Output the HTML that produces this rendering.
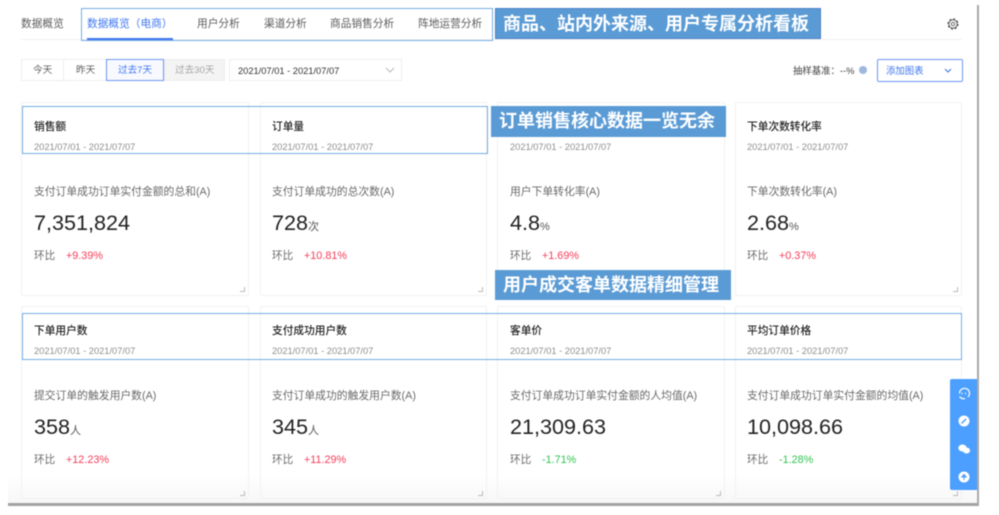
<!DOCTYPE html>
<html lang="zh">
<head>
<meta charset="utf-8">
<title>数据概览</title>
<style>
html,body{margin:0;padding:0;background:#fff;}
body{width:999px;height:515px;overflow:hidden;position:relative;font-family:"Liberation Sans","Noto Sans CJK SC",sans-serif;}
#p{position:absolute;left:0;top:0;width:999px;height:515px;filter:blur(.5px);overflow:hidden;background:#fff;}
#p div{position:absolute;white-space:nowrap;}
.t{font-size:10.7px;line-height:14px;color:#5c5c5c;}
.card{width:227.5px;height:193px;border:1px solid #f2f2f2;border-radius:2px;box-sizing:border-box;background:transparent;}
.ti{font-size:10.7px;line-height:14px;color:#222;font-weight:500;}
.dt{font-size:9.3px;line-height:12px;color:#8e8e8e;}
.de{font-size:10.8px;line-height:14px;color:#6a6a6a;}
.v{font-size:21.6px;line-height:26px;color:#222;}
.v span{font-size:11px;color:#555;}
.hb{font-size:10.6px;line-height:14px;color:#6a6a6a;}
.up{font-size:10.8px;line-height:14px;color:#f53c58;}
.dn{font-size:10.8px;line-height:14px;color:#30c552;}
.rz{width:5px;height:5px;border-right:1.5px solid #bbb;border-bottom:1.5px solid #bbb;box-sizing:border-box;}
.bn{background:#5b9bd5;color:#fff;font-size:18px;font-weight:700;line-height:30px;box-sizing:border-box;}
.ol{border:1.3px solid #74ade2;box-sizing:border-box;}
</style>
</head>
<body>
<div id="p">
  <!-- frame -->
  <div style="left:8px;top:475px;width:968px;height:28px;background:linear-gradient(#fff,#f7f7f7)"></div>
  <div style="left:8px;top:503px;width:971px;height:3px;background:#a2a2a2"></div>
  <div style="left:976.5px;top:5px;width:2.5px;height:501px;background:#a8a8a8"></div>

  <!-- header -->
  <div style="left:21px;top:39px;width:941px;height:1px;background:#f0f0f0"></div>
  <div class="t" style="left:21px;top:17px">数据概览</div>
  <div class="t" style="left:87px;top:17px;color:#3f78f0">数据概览（电商）</div>
  <div style="left:87px;top:38px;width:86px;height:2px;background:#3f78f0"></div>
  <div class="t" style="left:197px;top:17px">用户分析</div>
  <div class="t" style="left:264px;top:17px">渠道分析</div>
  <div class="t" style="left:330px;top:17px">商品销售分析</div>
  <div class="t" style="left:418px;top:17px">阵地运营分析</div>
  <div class="ol" style="left:81px;top:8px;width:412px;height:33px"></div>
  <div class="bn" style="left:495px;top:8px;width:326px;height:31px;padding-left:7px;border:1px solid #4a80c8">商品、站内外来源、用户专属分析看板</div>
  <svg style="position:absolute;left:947px;top:18px" width="12" height="12" viewBox="0 0 12 12" fill="none" stroke="#555">
    <circle cx="6" cy="6" r="4.2" stroke-width=".9"/>
    <circle cx="6" cy="6" r="5" stroke-width="1.2" stroke-dasharray="2 1.93"/>
    <circle cx="6" cy="6" r="1.7" stroke-width=".9"/>
  </svg>

  <!-- filter row -->
  <div style="left:21px;top:59px;width:43px;height:22px;border:1px solid #eee;box-sizing:border-box"></div>
  <div style="left:63px;top:59px;width:44px;height:22px;border:1px solid #eee;box-sizing:border-box"></div>
  <div style="left:164px;top:59px;width:61px;height:22px;background:#f4f4f4;border:1px solid #eee;box-sizing:border-box"></div>
  <div style="left:106px;top:59px;width:58px;height:22px;background:#f7f9ff;border:1px solid #6d97f2;box-sizing:border-box"></div>
  <div style="left:229px;top:59px;width:173px;height:22px;border:1px solid #eee;box-sizing:border-box"></div>
  <div class="t" style="left:33px;top:63.5px;font-size:9.6px">今天</div>
  <div class="t" style="left:76px;top:63.5px;font-size:9.6px">昨天</div>
  <div class="t" style="left:118px;top:63.5px;font-size:9.6px;color:#3f78f0">过去7天</div>
  <div class="t" style="left:175px;top:63.5px;font-size:9.6px;color:#a5a5a5">过去30天</div>
  <div class="dt" style="left:238px;top:64.5px;color:#333">2021/07/01 - 2021/07/07</div>
  <svg style="position:absolute;left:385px;top:67px" width="10" height="7" viewBox="0 0 10 7" fill="none" stroke="#bbb" stroke-width="1"><path d="M1 1l4 4 4-4"/></svg>
  <div class="t" style="left:793px;top:63.5px;font-size:9.4px;color:#444">抽样基准：--%</div>
  <div style="left:859px;top:66px;width:8px;height:8px;border-radius:50%;background:#9db8dc"></div>
  <div style="left:877px;top:59px;width:86px;height:23px;border:1px solid #6d97f2;border-radius:2px;box-sizing:border-box"></div>
  <div class="t" style="left:886px;top:64px;font-size:9.4px;color:#3f78f0">添加图表</div>
  <svg style="position:absolute;left:944px;top:68px" width="8" height="6" viewBox="0 0 8 6" fill="none" stroke="#3f78f0" stroke-width="1.1"><path d="M1 1l3 3 3-3"/></svg>

  <!-- row 1 cards -->
  <div class="card" style="left:21px;top:102px;height:194px"></div>
  <div class="card" style="left:259.5px;top:102px;height:194px"></div>
  <div class="card" style="left:497px;top:102px;height:194px"></div>
  <div class="card" style="left:734.5px;top:102px;height:194px"></div>
  <!-- row 2 cards -->
  <div class="card" style="left:21px;top:306px"></div>
  <div class="card" style="left:259.5px;top:306px"></div>
  <div class="card" style="left:497px;top:306px"></div>
  <div class="card" style="left:734.5px;top:306px"></div>

  <!-- card 1 -->
  <div class="ti" style="left:34px;top:120px">销售额</div>
  <div class="dt" style="left:34px;top:141px">2021/07/01 - 2021/07/07</div>
  <div class="de" style="left:34px;top:185px">支付订单成功订单实付金额的总和(A)</div>
  <div class="v" style="left:34px;top:210px">7,351,824</div>
  <div class="hb" style="left:34px;top:249px">环比</div>
  <div class="up" style="left:66px;top:249px">+9.39%</div>
  <div class="rz" style="left:240px;top:287px"></div>

  <!-- card 2 -->
  <div class="ti" style="left:272px;top:120px">订单量</div>
  <div class="dt" style="left:272px;top:141px">2021/07/01 - 2021/07/07</div>
  <div class="de" style="left:272px;top:185px">支付订单成功的总次数(A)</div>
  <div class="v" style="left:272px;top:210px">728<span>次</span></div>
  <div class="hb" style="left:272px;top:249px">环比</div>
  <div class="up" style="left:304px;top:249px">+10.81%</div>
  <div class="rz" style="left:478px;top:287px"></div>

  <!-- card 3 -->
  <div class="dt" style="left:510px;top:141px">2021/07/01 - 2021/07/07</div>
  <div class="de" style="left:510px;top:185px">用户下单转化率(A)</div>
  <div class="v" style="left:510px;top:210px">4.8<span>%</span></div>
  <div class="hb" style="left:510px;top:249px">环比</div>
  <div class="up" style="left:542px;top:249px">+1.69%</div>

  <!-- card 4 -->
  <div class="ti" style="left:747px;top:120px">下单次数转化率</div>
  <div class="dt" style="left:747px;top:141px">2021/07/01 - 2021/07/07</div>
  <div class="de" style="left:747px;top:185px">下单次数转化率(A)</div>
  <div class="v" style="left:747px;top:210px">2.68<span>%</span></div>
  <div class="hb" style="left:747px;top:249px">环比</div>
  <div class="up" style="left:779px;top:249px">+0.37%</div>
  <div class="rz" style="left:953px;top:287px"></div>

  <!-- card 5 -->
  <div class="ti" style="left:34px;top:324px">下单用户数</div>
  <div class="dt" style="left:34px;top:345px">2021/07/01 - 2021/07/07</div>
  <div class="de" style="left:34px;top:389px">提交订单的触发用户数(A)</div>
  <div class="v" style="left:34px;top:414px">358<span>人</span></div>
  <div class="hb" style="left:34px;top:453px">环比</div>
  <div class="up" style="left:66px;top:453px">+12.23%</div>
  <div class="rz" style="left:240px;top:491px"></div>

  <!-- card 6 -->
  <div class="ti" style="left:272px;top:324px">支付成功用户数</div>
  <div class="dt" style="left:272px;top:345px">2021/07/01 - 2021/07/07</div>
  <div class="de" style="left:272px;top:389px">支付订单成功的触发用户数(A)</div>
  <div class="v" style="left:272px;top:414px">345<span>人</span></div>
  <div class="hb" style="left:272px;top:453px">环比</div>
  <div class="up" style="left:304px;top:453px">+11.29%</div>
  <div class="rz" style="left:478px;top:491px"></div>

  <!-- card 7 -->
  <div class="ti" style="left:510px;top:324px">客单价</div>
  <div class="dt" style="left:510px;top:345px">2021/07/01 - 2021/07/07</div>
  <div class="de" style="left:510px;top:389px">支付订单成功订单实付金额的人均值(A)</div>
  <div class="v" style="left:510px;top:414px">21,309.63</div>
  <div class="hb" style="left:510px;top:453px">环比</div>
  <div class="dn" style="left:542px;top:453px">-1.71%</div>
  <div class="rz" style="left:716px;top:491px"></div>

  <!-- card 8 -->
  <div class="ti" style="left:747px;top:324px">平均订单价格</div>
  <div class="dt" style="left:747px;top:345px">2021/07/01 - 2021/07/07</div>
  <div class="de" style="left:747px;top:389px">支付订单成功订单实付金额的均值(A)</div>
  <div class="v" style="left:747px;top:414px">10,098.66</div>
  <div class="hb" style="left:747px;top:453px">环比</div>
  <div class="dn" style="left:779px;top:453px">-1.28%</div>
  <div class="rz" style="left:953px;top:491px"></div>

  <!-- annotation overlays -->
  <div class="ol" style="left:22px;top:106px;width:466px;height:48px"></div>
  <div class="ol" style="left:22px;top:313px;width:940px;height:47px"></div>
  <div class="bn" style="left:491px;top:106px;width:235px;height:31px;padding-left:8px">订单销售核心数据一览无余</div>
  <div class="bn" style="left:495px;top:270px;width:235.5px;height:30px;padding-left:8px">用户成交客单数据精细管理</div>

  <!-- side panel -->
  <div style="left:950px;top:379px;width:27px;height:111px;background:#4c9ffe;border-radius:2px 0 0 2px"></div>
  <svg style="position:absolute;left:950px;top:379px" width="27" height="111" viewBox="0 0 27 111">
    <path d="M9.5 14.5a5 5 0 1 1 8.5 3.4M9.6 17.5a5 5 0 0 0 5.4 2" fill="none" stroke="#fff" stroke-width="1.2"/>
    <circle cx="12" cy="14.5" r=".7" fill="#fff"/><circle cx="15.5" cy="14.5" r=".7" fill="#fff"/>
    <circle cx="14" cy="42" r="5.5" fill="#fff"/>
    <path d="M11.5 44.5l4.5-4.5" stroke="#4c9ffe" stroke-width="1.4"/>
    <ellipse cx="12.5" cy="69" rx="4.2" ry="3.5" fill="#fff"/>
    <ellipse cx="16.5" cy="71.5" rx="3.6" ry="3" fill="#fff"/>
    <circle cx="14" cy="98" r="5.5" fill="#fff"/>
    <path d="M14 101v-5M11.8 98l2.2-2.6 2.2 2.6z" stroke="#4c9ffe" stroke-width="1" fill="#4c9ffe"/>
  </svg>
</div>
</body>
</html>
